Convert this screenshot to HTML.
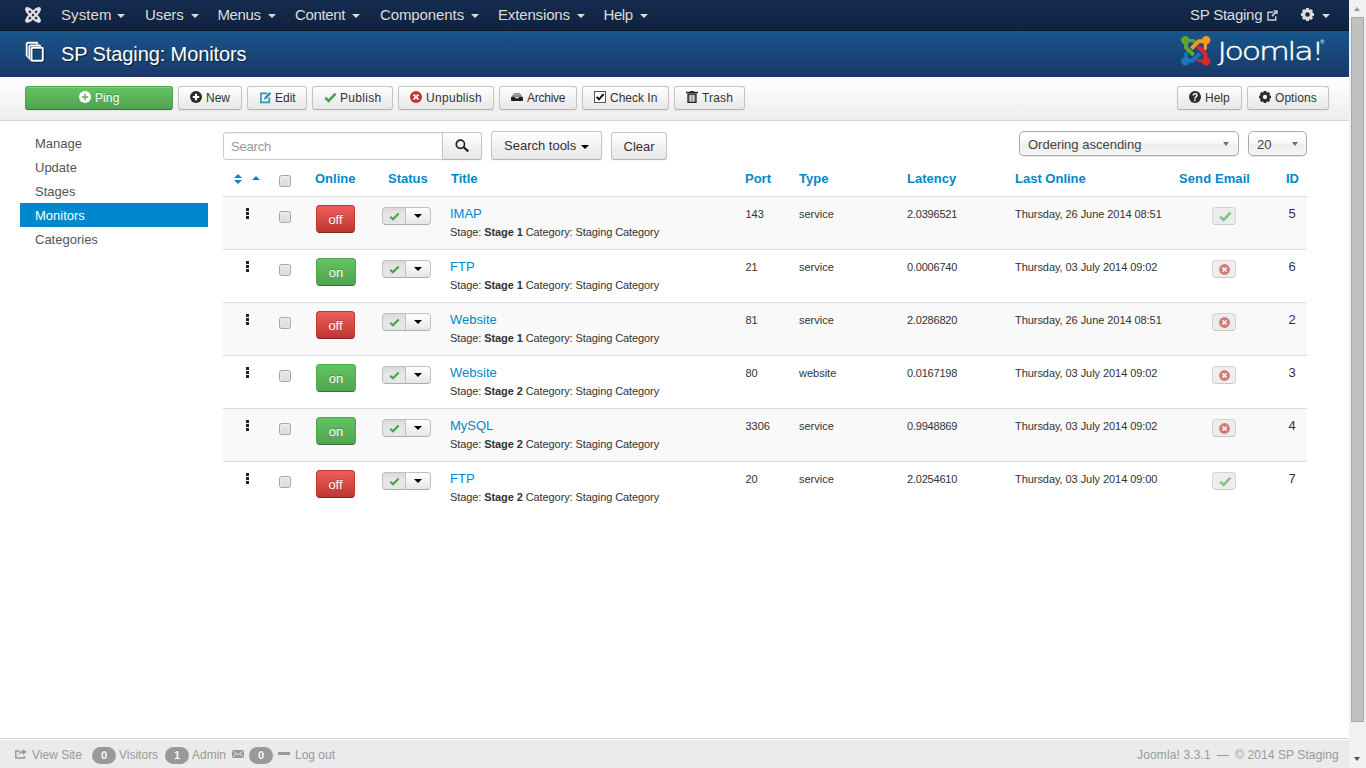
<!DOCTYPE html>
<html lang="en">
<head>
<meta charset="utf-8">
<title>SP Staging - Administration - SP Staging: Monitors</title>
<style>
*{box-sizing:border-box}
html,body{margin:0;padding:0}
html{overflow:hidden;background:#fff}
body{width:1366px;height:768px;overflow:hidden;position:relative;font-family:"Liberation Sans",Arial,sans-serif;font-size:13px;line-height:18px;color:#333;background:#fff}
a{color:#08c;text-decoration:none}
i,b,u{font-style:normal;font-weight:normal;text-decoration:none}
#page{position:absolute;left:0;top:0;width:1349px;height:768px;overflow:hidden;background:#fff}

/* ---------- top navbar ---------- */
.navbar{position:absolute;left:0;top:0;width:1349px;height:31px;background:#13294a;background-image:linear-gradient(#152c50,#10223e);border-bottom:1px solid #0b1627}
.nav{margin:0;padding:0;list-style:none}
.nav li{position:absolute;top:0;height:30px;line-height:30px;font-size:15px;color:#dcdcdc;white-space:nowrap}
.car{width:0;height:0;border-top:4px solid #dcdcdc;border-left:4px solid transparent;border-right:4px solid transparent}
.nav li.car{top:14px;height:0}
.site{position:absolute;left:1190px;top:0;height:30px;line-height:30px;font-size:15px;letter-spacing:-.25px;color:#dcdcdc;white-space:nowrap}

/* ---------- header ---------- */
.header{position:absolute;left:0;top:31px;width:1349px;height:46px;background:#184a7d;background-image:linear-gradient(#17568c,#1a3867)}
.page-title{position:absolute;left:61px;top:0;margin:0;height:46px;line-height:46px;font-size:20px;letter-spacing:-.1px;font-weight:normal;color:#fff;text-shadow:1px 1px 1px rgba(0,0,0,.5);white-space:nowrap}

/* ---------- subhead toolbar ---------- */
.subhead{position:absolute;left:0;top:77px;width:1349px;height:44px;background:#f4f4f4;background-image:linear-gradient(#fff,#ededed);border-bottom:1px solid #d3d3d3}
.btn{position:absolute;top:9px;height:24px;line-height:22px;font-size:12px;color:#333;border:1px solid #bbb;border-color:#c5c5c5 #c5c5c5 #b3b3b3;border-radius:3px;background:#f3f3f3;background-image:linear-gradient(#fff,#e6e6e6);box-shadow:inset 0 1px 0 rgba(255,255,255,.2),0 1px 2px rgba(0,0,0,.05);white-space:nowrap;padding:0}
.btn span{position:absolute;top:0}
.btn-success{color:#fff;background:#51a351;background-image:linear-gradient(#62c462,#51a351);border-color:#51a351 #51a351 #387038;text-shadow:0 -1px 0 rgba(0,0,0,.25)}

/* ---------- sidebar ---------- */
.sidebar{position:absolute;left:20px;top:131px;width:188px;margin:0;padding:0;list-style:none}
.sidebar li{height:24px;line-height:26px;padding-left:15px;font-size:13px;color:#555}
.sidebar li.active{background:#08c;color:#fff}

/* ---------- content ---------- */
#content{position:absolute;left:223px;top:121px;width:1084px}
.inp{position:absolute;left:0;top:11px;width:220px;height:28px;border:1px solid #ccc;border-radius:3px 0 0 3px;background:#fff;box-shadow:inset 0 1px 1px rgba(0,0,0,.075);font-size:13px;line-height:27px;padding-left:7px;letter-spacing:-.2px;color:#999}
.fbtn{position:absolute;height:28px;line-height:26px;font-size:13px;color:#333;border:1px solid #bbb;border-color:#c5c5c5 #c5c5c5 #b3b3b3;border-radius:3px;background:#f3f3f3;background-image:linear-gradient(#fff,#e6e6e6);box-shadow:inset 0 1px 0 rgba(255,255,255,.2),0 1px 2px rgba(0,0,0,.05);white-space:nowrap}
.dcaret{width:0;height:0;border-top:4px solid #000;border-left:4px solid transparent;border-right:4px solid transparent}
.sel{position:absolute;top:10px;height:25px;line-height:25px;font-size:13px;color:#444;border:1px solid #aaa;border-radius:5px;background:#fff;background-image:linear-gradient(#fff 20%,#f6f6f6 50%,#eee 52%,#f4f4f4 100%);box-shadow:0 0 3px #fff inset,0 1px 1px rgba(0,0,0,.1);padding-left:8px;white-space:nowrap}
.sel i{position:absolute;right:9px;top:9.5px;width:0;height:0;border-top:4.5px solid #6e6e6e;border-left:3.5px solid transparent;border-right:3.5px solid transparent}

.th{position:absolute;top:49px;height:18px;line-height:18px;font-size:13px;font-weight:bold;color:#08c;white-space:nowrap}
.row{position:absolute;left:0;width:1084px;height:53px;border-top:1px solid #ddd}
.row.odd{background:#f9f9f9}
.row>*{position:absolute}
.hdl{left:23px;top:11px;width:3px;height:11px}
.hdl i{display:block;width:3px;height:3px;background:#222;margin-bottom:1px}
.cb{left:56px;top:14px;width:12px;height:12px;border:1px solid #a6a6a6;border-radius:2.5px;background:#e1e1e1;background-image:linear-gradient(#e9e9e9,#dadada);box-shadow:inset 0 0 0 1px rgba(255,255,255,.25)}
.badge{left:93px;top:8px;width:39px;height:28px;border-radius:4px;color:#fff;font-size:13px;line-height:28px;text-align:center;text-shadow:0 -1px 0 rgba(0,0,0,.25);border:1px solid}
.badge.off{background:#bd362f;background-image:linear-gradient(#ee5f5b,#bd362f);border-color:#bd362f #bd362f #802420}
.badge.on{width:40px;background:#51a351;background-image:linear-gradient(#62c462,#51a351);border-color:#51a351 #51a351 #387038}
.grp{left:159px;top:10px;width:49px;height:18px}
.grp b,.grp u{position:absolute;top:0;height:18px;border:1px solid #bbb;border-color:#c0c0c0 #c0c0c0 #aeaeae;display:block}
.grp b{left:0;width:24px;border-radius:4px 0 0 4px;background:#e6e6e6;background-image:linear-gradient(#d9d9d9,#e6e6e6 40%);z-index:1}
.grp u{left:23px;width:26px;border-radius:0 4px 4px 0;background:#f3f3f3;background-image:linear-gradient(#fff,#e6e6e6)}
.grp u:after{content:"";position:absolute;left:8px;top:6px;width:0;height:0;border-top:4px solid #000;border-left:4px solid transparent;border-right:4px solid transparent}
.ttl{left:227px;top:8px;font-size:13px;line-height:18px;color:#08c;white-space:nowrap}
.sm{left:227px;top:28px;font-size:11px;line-height:14px;letter-spacing:-.09px;color:#333;white-space:nowrap}
.c{top:8px;font-size:11px;line-height:18px;color:#333;white-space:nowrap}
.port{left:522.5px}.type{left:576px}.lat{left:684px;letter-spacing:-.2px}.date{left:792px;letter-spacing:-.06px}
.mail{left:989px;top:10px;width:24px;height:18px;border:1px solid #c0c0c0;border-bottom-color:#aeaeae;border-radius:4px;background:#e6e6e6;opacity:.65}
.id{left:1044px;width:50px;top:8px;text-align:center;font-size:13px;line-height:18px;color:#333}

/* ---------- footer ---------- */
#status{position:absolute;left:0;top:738px;width:1349px;height:30px;background:#ebebeb;border-top:1px solid #d4d4d4;box-shadow:0 1px 0 #fff inset;font-size:12px;color:#999;line-height:30px}
#status span{position:absolute;top:1px;white-space:nowrap}
#status .pill{top:8px;width:24px;height:17px;border-radius:9px;background:#999;color:#fff;font-size:11px;font-weight:bold;line-height:17px;text-align:center;text-shadow:0 -1px 0 rgba(0,0,0,.25)}

/* ---------- fake scrollbar ---------- */
#sb{position:absolute;left:1349px;top:0;width:17px;height:768px;background:#f1f1f1}
#sb .thumb{position:absolute;left:2px;top:17px;width:13px;height:705px;background:#c1c1c1;border:1px solid #a8a8a8}
#sb .up{position:absolute;left:5px;top:7px;width:0;height:0;border-left:3.5px solid transparent;border-right:3.5px solid transparent;border-bottom:4px solid #999}
#sb .down{position:absolute;left:5px;top:757px;width:0;height:0;border-left:3.5px solid transparent;border-right:3.5px solid transparent;border-top:4px solid #505050}
</style>
</head>
<body>
<div id="page">

<div class="navbar">
  <svg width="16" height="16" viewBox="0 0 16 16" style="position:absolute;left:25px;top:7px"><g fill="none" stroke="#e0e0e0" stroke-width="2.1"><rect x="0.6" y="5.85" width="14.8" height="4.3" rx="2.15" transform="rotate(45 8 8)"/><rect x="0.6" y="5.85" width="14.8" height="4.3" rx="2.15" transform="rotate(-45 8 8)"/></g><g fill="#e0e0e0"><circle cx="2.4" cy="2.4" r="2.4"/><circle cx="13.6" cy="2.4" r="2.4"/><circle cx="2.4" cy="13.6" r="2.4"/><circle cx="13.6" cy="13.6" r="2.4"/></g></svg>
  <ul class="nav"><li style="left:61px;letter-spacing:0.1px">System</li><li class="car" style="left:117px"></li><li style="left:145px;letter-spacing:-0.1px">Users</li><li class="car" style="left:190.5px"></li><li style="left:217.5px;letter-spacing:-0.4px">Menus</li><li class="car" style="left:267.5px"></li><li style="left:295px;letter-spacing:-0.35px">Content</li><li class="car" style="left:352px"></li><li style="left:380px;letter-spacing:-0.1px">Components</li><li class="car" style="left:470.5px"></li><li style="left:498px;letter-spacing:-0.15px">Extensions</li><li class="car" style="left:576.5px"></li><li style="left:603.5px;letter-spacing:-0.4px">Help</li><li class="car" style="left:639.5px"></li></ul>
  <span class="site">SP Staging</span><svg width="11" height="11" viewBox="0 0 11 11" style="position:absolute;left:1267px;top:10px"><path d="M6.2,2.3 H1 V10 H8.7 V6.2" fill="none" stroke="#d0d0d0" stroke-width="1.4"/><path d="M6.2,0.3 H10.7 V4.8 L9.1,3.2 L5.6,6.7 L4.3,5.4 L7.8,1.9 Z" fill="#d0d0d0"/></svg>
  <svg width="13" height="13" viewBox="0 0 12 12" style="position:absolute;left:1301px;top:8px"><path d="M10.67,4.52 L11.95,4.67 L11.95,7.33 L10.67,7.48 L10.35,8.26 L11.15,9.27 L9.27,11.15 L8.26,10.35 L7.48,10.67 L7.33,11.95 L4.67,11.95 L4.52,10.67 L3.74,10.35 L2.73,11.15 L0.85,9.27 L1.65,8.26 L1.33,7.48 L0.05,7.33 L0.05,4.67 L1.33,4.52 L1.65,3.74 L0.85,2.73 L2.73,0.85 L3.74,1.65 L4.52,1.33 L4.67,0.05 L7.33,0.05 L7.48,1.33 L8.26,1.65 L9.27,0.85 L11.15,2.73 L10.35,3.74Z M3.85,6.00 a2.15,2.15 0 1,0 4.30,0 a2.15,2.15 0 1,0 -4.30,0Z" fill="#dcdcdc" fill-rule="evenodd"/></svg><b class="car" style="position:absolute;left:1321.5px;top:14px"></b>
</div>

<div class="header">
  <svg width="22" height="24" viewBox="0 0 22 24" style="position:absolute;left:25px;top:10px"><g fill="none" stroke="rgba(0,0,20,.55)" stroke-width="1.9" stroke-linejoin="round" transform="translate(1,1)"><rect x="6.6" y="6.8" width="11.2" height="13" rx="1"/><path d="M4.4,17.6 V5.5 a1,1 0 0 1 1,-1 H14.2 a1,1 0 0 1 1,1 V5.8"/><path d="M1.7,14.9 V2.8 a1,1 0 0 1 1,-1 H11.5 a1,1 0 0 1 1,1 V3.5"/><path d="M1.7,14.9 L4.4,17.6 L6.6,19.7" stroke-width="1.2"/></g><g fill="none" stroke="#fff" stroke-width="1.9" stroke-linejoin="round" transform="translate(0,0)"><rect x="6.6" y="6.8" width="11.2" height="13" rx="1"/><path d="M4.4,17.6 V5.5 a1,1 0 0 1 1,-1 H14.2 a1,1 0 0 1 1,1 V5.8"/><path d="M1.7,14.9 V2.8 a1,1 0 0 1 1,-1 H11.5 a1,1 0 0 1 1,1 V3.5"/><path d="M1.7,14.9 L4.4,17.6 L6.6,19.7" stroke-width="1.2"/></g></svg>
  <h1 class="page-title">SP Staging: Monitors</h1>
  <svg width="30" height="30" viewBox="0 0 30 30" style="position:absolute;left:1181px;top:5px"><g fill="none" stroke-width="4" stroke-linejoin="round"><path d="M6.3,24.6 H11.6 L18.9,17.3" stroke="#1c75bc"/><path d="M5.1,23.5 V17" stroke="#1c75bc" stroke-width="3.2" stroke-linecap="round"/><circle cx="4.3" cy="25.3" r="2.2" stroke="#1c75bc" fill="#1c75bc"/><path d="M5.1,6.3 V11.7 L12.6,19.1" stroke="#5fa72c"/><path d="M6.5,4.7 H11.2 Q13.3,4.9 13.6,6.4" stroke="#5fa72c" stroke-width="3.2" stroke-linecap="round"/><circle cx="4.3" cy="4.3" r="2.2" stroke="#5fa72c" fill="#5fa72c"/><path d="M23.2,5.3 H17.6 L10.4,12.6" stroke="#f8981d"/><path d="M24.3,6.5 V12.6" stroke="#f8981d" stroke-width="3.2" stroke-linecap="round"/><circle cx="25.2" cy="4.3" r="2.2" stroke="#f8981d" fill="#f8981d"/><path d="M24.3,23.2 V17.7 L16.9,10.5" stroke="#e2242a"/><path d="M23,25 L17.2,24.5" stroke="#e2242a" stroke-width="3.2" stroke-linecap="round"/><circle cx="25.2" cy="25.3" r="2.2" stroke="#e2242a" fill="#e2242a"/></g></svg><svg width="116" height="32" viewBox="0 0 116 32" style="position:absolute;left:1212px;top:4px"><text transform="translate(5.4,24.9) scale(1.27,1)" font-family="DejaVu Sans Light,DejaVu Sans,sans-serif" font-weight="200" font-size="25" letter-spacing="-1.75" fill="#fff" stroke="#fff" stroke-width=".4">Joomla!</text><text x="108.3" y="9.4" font-family="Liberation Sans,sans-serif" font-size="5.5" fill="#fff">®</text></svg>
</div>

<div class="subhead">
  <div class="btn btn-success" style="left:25px;width:148px"><svg width="12" height="12" viewBox="0 0 12 12" style="position:absolute;left:53px;top:4px"><circle cx="6" cy="6" r="6" fill="#fff"/><path d="M2.8,6 H9.2 M6,2.8 V9.2" stroke="#58b058" stroke-width="1.4" fill="none"/></svg><span style="left:69px;letter-spacing:0.1px">Ping</span></div>
  <div class="btn" style="left:178px;width:64px"><svg width="12" height="12" viewBox="0 0 12 12" style="position:absolute;left:11px;top:4px"><circle cx="6" cy="6" r="6" fill="#2b2b2b"/><path d="M2.8,6 H9.2 M6,2.8 V9.2" stroke="#fff" stroke-width="2.2" fill="none"/></svg><span style="left:27px;letter-spacing:0px">New</span></div>
  <div class="btn" style="left:247px;width:60px"><svg width="13" height="13" viewBox="0 0 13 13" style="position:absolute;left:11px;top:4px"><path d="M8.2,2.4 H1.9 V11.4 H10.3 V6.6" fill="none" stroke="#2f96b4" stroke-width="1.7"/><path d="M5,8.6 L5.5,6.3 L10.6,0.9 L12.4,2.6 L7.3,8 Z" fill="#2f96b4"/></svg><span style="left:27px;letter-spacing:0px">Edit</span></div>
  <div class="btn" style="left:312px;width:81px"><svg width="13" height="11" viewBox="0 0 13 11" style="position:absolute;left:11px;top:5px"><path d="M1.3,5.8 L4.6,8.9 L11.6,1.7" fill="none" stroke="#46a546" stroke-width="2.6"/></svg><span style="left:27px;letter-spacing:0.3px">Publish</span></div>
  <div class="btn" style="left:398px;width:96px"><svg width="12" height="12" viewBox="0 0 12 12" style="position:absolute;left:11px;top:4px"><circle cx="6" cy="6" r="6" fill="#bd362f"/><path d="M3.6,3.6 L8.4,8.4 M8.4,3.6 L3.6,8.4" stroke="#fff" stroke-width="1.9" fill="none"/></svg><span style="left:27px;letter-spacing:0.3px">Unpublish</span></div>
  <div class="btn" style="left:499px;width:78px"><svg width="12" height="9" viewBox="0 0 12 9" style="position:absolute;left:11px;top:6px"><path d="M3.2,0.2 H8.8 L11.8,4.2 H0.2 Z" fill="#777"/><path d="M2.6,1.6 H9.4 M1.8,2.9 H10.2" stroke="#bbb" stroke-width=".7"/><path d="M0.1,4.1 H4 V5.3 H8 V4.1 H11.9 V8 H0.1 Z" fill="#1e1e1e"/></svg><span style="left:27px;letter-spacing:-0.25px">Archive</span></div>
  <div class="btn" style="left:582px;width:87px"><svg width="12" height="12" viewBox="0 0 12 12" style="position:absolute;left:11px;top:4px"><rect x=".5" y=".5" width="11" height="11" fill="#fff" stroke="#555" stroke-width="1"/><path d="M2.6,5.9 L5,8.3 L9.6,3.2" fill="none" stroke="#111" stroke-width="2"/></svg><span style="left:27px;letter-spacing:0px">Check In</span></div>
  <div class="btn" style="left:674px;width:71px"><svg width="12" height="12" viewBox="0 0 12 12" style="position:absolute;left:11px;top:4px"><path d="M0,1.5 H12 M4.2,0.6 H7.8" stroke="#222" stroke-width="1.3" fill="none"/><rect x="2" y="3.1" width="8" height="8.3" fill="#999" stroke="#222" stroke-width="1.3"/><path d="M4.7,4 V10.6 M7.3,4 V10.6" stroke="#e8e8e8" stroke-width=".9"/></svg><span style="left:27px;letter-spacing:0.15px">Trash</span></div>
  <div class="btn" style="left:1177px;width:65px"><svg width="12" height="12" viewBox="0 0 12 12" style="position:absolute;left:11px;top:4px"><circle cx="6" cy="6" r="6" fill="#2b2b2b"/><text x="6" y="9.6" text-anchor="middle" font-family="Liberation Sans,sans-serif" font-weight="bold" font-size="10" fill="#fff">?</text></svg><span style="left:27px;letter-spacing:0px">Help</span></div>
  <div class="btn" style="left:1247px;width:82px"><svg width="12" height="12" viewBox="0 0 12 12" style="position:absolute;left:11px;top:4px"><path d="M10.67,4.52 L11.95,4.67 L11.95,7.33 L10.67,7.48 L10.35,8.26 L11.15,9.27 L9.27,11.15 L8.26,10.35 L7.48,10.67 L7.33,11.95 L4.67,11.95 L4.52,10.67 L3.74,10.35 L2.73,11.15 L0.85,9.27 L1.65,8.26 L1.33,7.48 L0.05,7.33 L0.05,4.67 L1.33,4.52 L1.65,3.74 L0.85,2.73 L2.73,0.85 L3.74,1.65 L4.52,1.33 L4.67,0.05 L7.33,0.05 L7.48,1.33 L8.26,1.65 L9.27,0.85 L11.15,2.73 L10.35,3.74Z M3.85,6.00 a2.15,2.15 0 1,0 4.30,0 a2.15,2.15 0 1,0 -4.30,0Z" fill="#2b2b2b" fill-rule="evenodd"/></svg><span style="left:27px;letter-spacing:0.05px">Options</span></div>
  
</div>

<ul class="sidebar">
  <li>Manage</li>
  <li>Update</li>
  <li>Stages</li>
  <li class="active">Monitors</li>
  <li>Categories</li>
</ul>

<div id="content">
  <div class="inp">Search</div>
  <div class="fbtn" style="left:219px;top:11px;width:40px;border-radius:0 3px 3px 0"><svg width="15" height="14" viewBox="0 0 15 14" style="position:absolute;left:12px;top:6px"><circle cx="5.4" cy="5.2" r="4.1" fill="none" stroke="#222" stroke-width="1.7"/><path d="M8.4,8 L13.3,12.3" stroke="#222" stroke-width="2.3" fill="none"/></svg></div>
  <div class="fbtn" style="left:268px;top:10px;width:111px;height:29px"><span style="position:absolute;left:12px;top:1px">Search tools</span><b class="dcaret" style="position:absolute;left:89px;top:12.5px"></b></div>
  <div class="fbtn" style="left:388px;top:11px;width:56px"><span style="position:absolute;left:11.5px;top:1px">Clear</span></div>
  <div class="sel" style="left:796px;width:220px">Ordering ascending<i></i></div>
  <div class="sel" style="left:1025px;width:59px">20<i style="right:8px"></i></div>

  <svg width="8" height="10" viewBox="0 0 8 10" style="position:absolute;left:11px;top:53px"><path d="M0,4 L4,0 L8,4 Z M0,6 L8,6 L4,10 Z" fill="#08c"/></svg><svg width="8" height="4" viewBox="0 0 8 4" style="position:absolute;left:29px;top:55px"><path d="M0,4 L4,0 L8,4 Z" fill="#08c"/></svg>
  <div class="cb" style="position:absolute;left:56px;top:54px"></div>
  <div class="th" style="left:92px">Online</div>
  <div class="th" style="left:165px">Status</div>
  <div class="th" style="left:228px">Title</div>
  <div class="th" style="left:522px">Port</div>
  <div class="th" style="left:576px">Type</div>
  <div class="th" style="left:684px">Latency</div>
  <div class="th" style="left:792px">Last Online</div>
  <div class="th" style="left:956px;letter-spacing:.1px">Send Email</div>
  <div class="th" style="left:1063px">ID</div>
  <div class="row odd" style="top:75px">
    <span class="hdl"><i></i><i></i><i></i></span><span class="cb"></span><span class="badge off">off</span>
    <span class="grp"><b><svg width="13" height="11" viewBox="0 0 13 11" style="position:absolute;left:6px;top:4px;width:11px;height:9px"><path d="M1.3,5.8 L4.6,8.9 L11.6,1.7" fill="none" stroke="#46a546" stroke-width="2.6"/></svg></b><u></u></span>
    <a class="ttl">IMAP</a>
    <span class="sm">Stage: <strong>Stage 1</strong> Category: Staging Category</span>
    <span class="c port">143</span><span class="c type">service</span><span class="c lat">2.0396521</span><span class="c date">Thursday, 26 June 2014 08:51</span>
    <span class="mail"><svg width="13" height="11" viewBox="0 0 13 11" style="position:absolute;left:6px;top:3px"><path d="M1.3,5.8 L4.6,8.9 L11.6,1.7" fill="none" stroke="#46a546" stroke-width="2.6"/></svg></span><span class="id">5</span>
  </div>
  <div class="row" style="top:128px">
    <span class="hdl"><i></i><i></i><i></i></span><span class="cb"></span><span class="badge on">on</span>
    <span class="grp"><b><svg width="13" height="11" viewBox="0 0 13 11" style="position:absolute;left:6px;top:4px;width:11px;height:9px"><path d="M1.3,5.8 L4.6,8.9 L11.6,1.7" fill="none" stroke="#46a546" stroke-width="2.6"/></svg></b><u></u></span>
    <a class="ttl">FTP</a>
    <span class="sm">Stage: <strong>Stage 1</strong> Category: Staging Category</span>
    <span class="c port">21</span><span class="c type">service</span><span class="c lat">0.0006740</span><span class="c date">Thursday, 03 July 2014 09:02</span>
    <span class="mail"><svg width="11" height="11" viewBox="0 0 11 11" style="position:absolute;left:6px;top:3px"><circle cx="5.5" cy="5.5" r="5.4" fill="#bd362f"/><path d="M3.5,3.5 L7.5,7.5 M7.5,3.5 L3.5,7.5" stroke="#fff" stroke-width="1.6" fill="none"/></svg></span><span class="id">6</span>
  </div>
  <div class="row odd" style="top:181px">
    <span class="hdl"><i></i><i></i><i></i></span><span class="cb"></span><span class="badge off">off</span>
    <span class="grp"><b><svg width="13" height="11" viewBox="0 0 13 11" style="position:absolute;left:6px;top:4px;width:11px;height:9px"><path d="M1.3,5.8 L4.6,8.9 L11.6,1.7" fill="none" stroke="#46a546" stroke-width="2.6"/></svg></b><u></u></span>
    <a class="ttl">Website</a>
    <span class="sm">Stage: <strong>Stage 1</strong> Category: Staging Category</span>
    <span class="c port">81</span><span class="c type">service</span><span class="c lat">2.0286820</span><span class="c date">Thursday, 26 June 2014 08:51</span>
    <span class="mail"><svg width="11" height="11" viewBox="0 0 11 11" style="position:absolute;left:6px;top:3px"><circle cx="5.5" cy="5.5" r="5.4" fill="#bd362f"/><path d="M3.5,3.5 L7.5,7.5 M7.5,3.5 L3.5,7.5" stroke="#fff" stroke-width="1.6" fill="none"/></svg></span><span class="id">2</span>
  </div>
  <div class="row" style="top:234px">
    <span class="hdl"><i></i><i></i><i></i></span><span class="cb"></span><span class="badge on">on</span>
    <span class="grp"><b><svg width="13" height="11" viewBox="0 0 13 11" style="position:absolute;left:6px;top:4px;width:11px;height:9px"><path d="M1.3,5.8 L4.6,8.9 L11.6,1.7" fill="none" stroke="#46a546" stroke-width="2.6"/></svg></b><u></u></span>
    <a class="ttl">Website</a>
    <span class="sm">Stage: <strong>Stage 2</strong> Category: Staging Category</span>
    <span class="c port">80</span><span class="c type">website</span><span class="c lat">0.0167198</span><span class="c date">Thursday, 03 July 2014 09:02</span>
    <span class="mail"><svg width="11" height="11" viewBox="0 0 11 11" style="position:absolute;left:6px;top:3px"><circle cx="5.5" cy="5.5" r="5.4" fill="#bd362f"/><path d="M3.5,3.5 L7.5,7.5 M7.5,3.5 L3.5,7.5" stroke="#fff" stroke-width="1.6" fill="none"/></svg></span><span class="id">3</span>
  </div>
  <div class="row odd" style="top:287px">
    <span class="hdl"><i></i><i></i><i></i></span><span class="cb"></span><span class="badge on">on</span>
    <span class="grp"><b><svg width="13" height="11" viewBox="0 0 13 11" style="position:absolute;left:6px;top:4px;width:11px;height:9px"><path d="M1.3,5.8 L4.6,8.9 L11.6,1.7" fill="none" stroke="#46a546" stroke-width="2.6"/></svg></b><u></u></span>
    <a class="ttl">MySQL</a>
    <span class="sm">Stage: <strong>Stage 2</strong> Category: Staging Category</span>
    <span class="c port">3306</span><span class="c type">service</span><span class="c lat">0.9948869</span><span class="c date">Thursday, 03 July 2014 09:02</span>
    <span class="mail"><svg width="11" height="11" viewBox="0 0 11 11" style="position:absolute;left:6px;top:3px"><circle cx="5.5" cy="5.5" r="5.4" fill="#bd362f"/><path d="M3.5,3.5 L7.5,7.5 M7.5,3.5 L3.5,7.5" stroke="#fff" stroke-width="1.6" fill="none"/></svg></span><span class="id">4</span>
  </div>
  <div class="row" style="top:340px">
    <span class="hdl"><i></i><i></i><i></i></span><span class="cb"></span><span class="badge off">off</span>
    <span class="grp"><b><svg width="13" height="11" viewBox="0 0 13 11" style="position:absolute;left:6px;top:4px;width:11px;height:9px"><path d="M1.3,5.8 L4.6,8.9 L11.6,1.7" fill="none" stroke="#46a546" stroke-width="2.6"/></svg></b><u></u></span>
    <a class="ttl">FTP</a>
    <span class="sm">Stage: <strong>Stage 2</strong> Category: Staging Category</span>
    <span class="c port">20</span><span class="c type">service</span><span class="c lat">2.0254610</span><span class="c date">Thursday, 03 July 2014 09:00</span>
    <span class="mail"><svg width="13" height="11" viewBox="0 0 13 11" style="position:absolute;left:6px;top:3px"><path d="M1.3,5.8 L4.6,8.9 L11.6,1.7" fill="none" stroke="#46a546" stroke-width="2.6"/></svg></span><span class="id">7</span>
  </div>
  
</div>

<div id="status">
  <svg width="12" height="10" viewBox="0 0 12 10" style="position:absolute;left:15px;top:10px"><path d="M4.6,2 H0.8 V9 H9.4 V7" fill="none" stroke="#999" stroke-width="1.5"/><path d="M7.6,0 L12,3 L7.6,6 V4 C5.6,4 4.4,4.6 3.4,6.4 C3.6,3.6 5,2.1 7.6,2 Z" fill="#999"/></svg><span style="left:32px">View Site</span>
  <span class="pill" style="left:92px">0</span><span style="left:119px">Visitors</span>
  <span class="pill" style="left:165px">1</span><span style="left:192px">Admin</span>
  <svg width="12" height="8" viewBox="0 0 12 8" style="position:absolute;left:232px;top:11px"><rect x="0" y="0" width="12" height="8" fill="#999"/><path d="M0.6,0.8 L6,4.9 L11.4,0.8 M0.6,7.4 L4.3,3.8 M11.4,7.4 L7.7,3.8" stroke="#ebebeb" stroke-width=".9" fill="none"/></svg><span class="pill" style="left:249px">0</span>
  <i style="position:absolute;left:278px;top:13px;width:12px;height:3px;background:#999"></i><span style="left:295px">Log out</span>
  <span style="left:1137px;letter-spacing:.14px">Joomla! 3.3.1</span><span style="left:1217px">—</span><span style="left:1235px;letter-spacing:.1px">© 2014 SP Staging</span>
</div>

</div>
<div id="sb"><div class="up"></div><div class="thumb"></div><div class="down"></div></div>
</body>
</html>
